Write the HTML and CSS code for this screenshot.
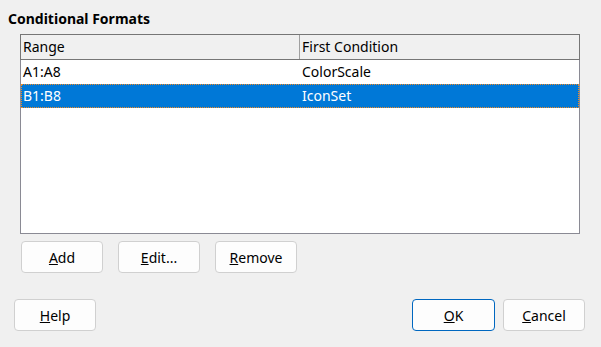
FILE: index.html
```html
<!DOCTYPE html>
<html lang="en">
<head>
    <meta charset="UTF-8">
    <title>Conditional Formats</title>
    <link rel="stylesheet" href="styles.css">
</head>
<body>

    <div class="dialog">
        <h2 class="title">Conditional Formats</h2>

        <div class="format-list">
            <div class="list-header">
                <div class="col col-range">Range</div>
                <div class="col col-cond">First Condition</div>
            </div>
            <div class="list-body">
                <div class="row">
                    <div class="col col-range">A1:A8</div>
                    <div class="col col-cond">ColorScale</div>
                </div>
                <div class="row selected">
                    <div class="col col-range">B1:B8</div>
                    <div class="col col-cond">IconSet</div>
                </div>
            </div>
        </div>

        <div class="list-actions">
            <button class="btn"><u>A</u>dd</button>
            <button class="btn"><u>E</u>dit...</button>
            <button class="btn"><u>R</u>emove</button>
        </div>

        <div class="dialog-footer">
            <button class="btn btn-help"><u>H</u>elp</button>
            <div class="footer-right">
                <button class="btn btn-default"><u>O</u>K</button>
                <button class="btn"><u>C</u>ancel</button>
            </div>
        </div>
    </div>

</body>
</html>
```

FILE: styles.css
```css
body {
    margin: 0;
    padding: 0;
    background-color: #f0f0f0;
    color: #000;
    font-family: "Noto Sans", "Open Sans", sans-serif;
    font-size: 14px;
}

.dialog {
    width: 601px;
    height: 347px;
    padding-top: 10px;
    box-sizing: border-box;
}

.title {
    margin: 0 0 0 8px;
    font-size: 14px;
    font-weight: bold;
    line-height: 18px;
    height: 24px;
}

.format-list {
    margin-left: 20px;
    width: 560px;
}

.list-header {
    display: flex;
    height: 26px;
    box-sizing: border-box;
    border: 1px solid #767676;
    background: #f0f0f0;
}

.list-header .col {
    line-height: 24px;
}

.list-header .col-range {
    border-right: 1px solid #a0a0a0;
}

.col {
    padding-left: 2px;
    box-sizing: border-box;
    white-space: nowrap;
}

.col-range {
    width: 279px;
}

.col-cond {
    flex: 1;
}

.list-body {
    height: 174px;
    box-sizing: border-box;
    border: 1px solid #8a8a94;
    border-top: none;
    background: #fff;
}

.row {
    display: flex;
    height: 24px;
    line-height: 24px;
}

.row.selected {
    background: #0078d7;
    color: #fff;
    outline: 1px dotted #f08a24;
    outline-offset: -1px;
}

.list-actions {
    display: flex;
    gap: 15px;
    margin: 7px 0 0 21px;
}

.btn {
    width: 82px;
    height: 32px;
    padding: 0;
    font-family: inherit;
    font-size: 14px;
    color: #000;
    background: #fdfdfd;
    border: 1px solid #d0d0d0;
    border-radius: 4px;
}

.btn u {
    text-underline-offset: 1px;
}

.btn-default {
    width: 83px;
    border-color: #0067c0;
}

.dialog-footer {
    display: flex;
    justify-content: space-between;
    margin: 26px 16px 0 14px;
}

.footer-right {
    display: flex;
    gap: 8px;
}
```
